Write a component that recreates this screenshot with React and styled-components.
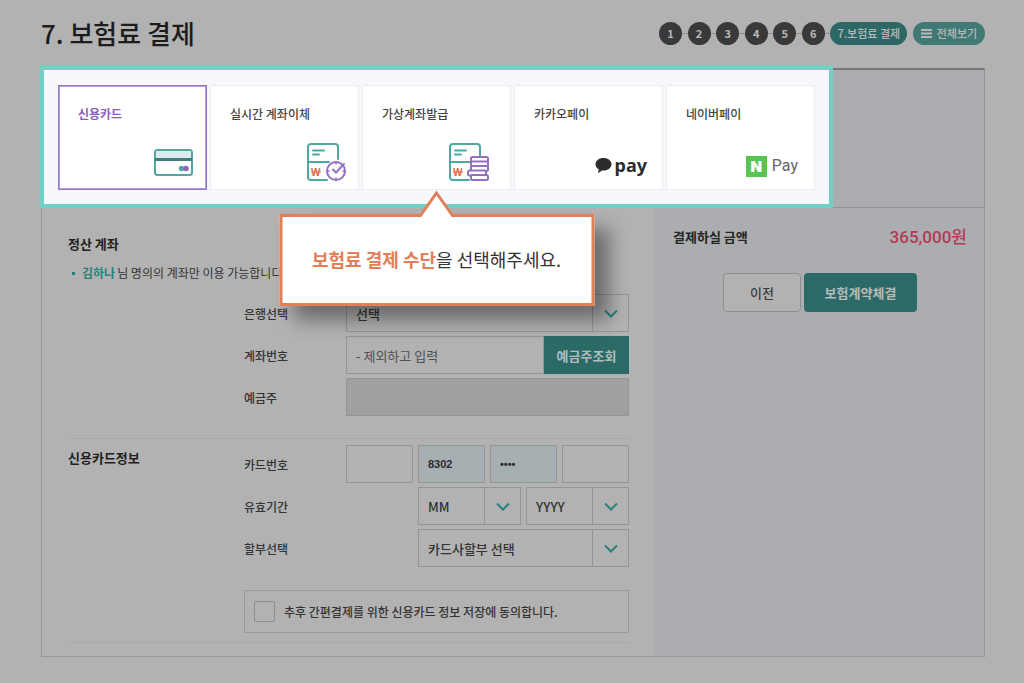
import { useState } from "react";
import styled, { createGlobalStyle } from "styled-components";

const GlobalStyle = createGlobalStyle`
  * {
    box-sizing: border-box;
  }

  body {
    margin: 0;
    background-color: #b2b2b2;
    color: #333;
    font-family: "Noto Sans CJK KR", "Noto Sans", sans-serif;
    font-size: 12px;
    line-height: 20px;
  }

  button,
  input,
  select {
    font-family: inherit;
    margin: 0;
  }
`;

const Page = styled.div`
  padding: 0 39px 27px 40px;
`;

const Header = styled.header`
  display: flex;
  align-items: center;
  justify-content: space-between;
  height: 66px;
  margin-left: 1px;
`;

const Title = styled.h1`
  margin: 0;
  font-size: 26px;
  line-height: 40px;
  font-weight: 500;
  color: #1c1c1c;
`;

const Steps = styled.ol`
  display: flex;
  align-items: center;
  justify-content: space-between;
  width: 326px;
  margin: 0;
  padding: 0;
  list-style: none;
  background: linear-gradient(#8d8d8d, #8d8d8d) 0 50% / 240px 1px no-repeat;
`;

const Step = styled.li`
  display: flex;
  align-items: center;
  justify-content: center;
  width: ${({ $current }) => ($current ? "77px" : "23px")};
  height: 23px;
  border-radius: 12px;
  background-color: ${({ $current }) => ($current ? "#2c6866" : "#393939")};
  color: #b8b8b8;
  font-size: 11px;
  font-weight: ${({ $current }) => ($current ? 500 : 700)};
  white-space: nowrap;
`;

const ViewAllButton = styled.button`
  display: flex;
  align-items: center;
  justify-content: center;
  gap: 5px;
  width: 72px;
  height: 23px;
  padding: 0;
  border: none;
  border-radius: 12px;
  background-color: #417a75;
  color: #b8b8b8;
  font-size: 11px;
  font-weight: 500;
  white-space: nowrap;
  cursor: pointer;
`;

const MethodRow = styled.div`
  display: flex;
  align-items: flex-end;
`;

const MethodList = styled.ul`
  flex: 1;
  display: flex;
  gap: 3px;
  margin: 0;
  padding: 15px 14px 14px;
  border: 4px solid #71d1c7;
  background-color: #f7f8fd;
  list-style: none;
`;

const MethodItem = styled.li`
  position: relative;
  flex: 1;
`;

const MethodCard = styled.button`
  display: flex;
  flex-direction: column;
  justify-content: space-between;
  width: 100%;
  height: 105px;
  padding: 18px 12px 7px 19px;
  border: 1px solid ${({ $active }) => ($active ? "#9a74c4" : "#ececf0")};
  box-shadow: ${({ $active }) => ($active ? "inset 0 0 0 1px #b79dd6" : "none")};
  background-color: #fff;
  color: ${({ $active }) => ($active ? "#8c5fbd" : "#444")};
  font-size: 12px;
  font-weight: ${({ $active }) => ($active ? 700 : 500)};
  line-height: 20px;
  text-align: left;
  cursor: pointer;
`;

const MethodIcon = styled.span`
  display: flex;
  align-items: center;
  justify-content: flex-end;
  align-self: flex-end;
  height: 40px;
`;

const KakaoPay = styled.span`
  display: flex;
  align-items: center;
  gap: 3px;
  padding: 6px 3px 0 0;
  color: #2c2c2c;
  font-family: "Noto Sans", sans-serif;
  font-size: 18px;
  font-weight: 700;
`;

const NaverPay = styled.span`
  display: flex;
  align-items: center;
  gap: 5px;
  padding: 8px 4px 0 0;
  color: #666;
  font-family: Roboto, sans-serif;
  font-size: 16px;
  font-weight: 400;
`;

const NaverMark = styled.span`
  width: 21px;
  height: 21px;
  background-color: #5ac452;
  color: #fff;
  font-family: Inter, sans-serif;
  font-size: 15px;
  font-weight: 900;
  line-height: 21px;
  text-align: center;
`;

const MethodBlank = styled.div`
  width: 152px;
  height: 140px;
  border: solid #929292;
  border-width: 2px 1px 1px 0;
  border-top-color: #777;
  background-color: #abacb0;
`;

const Tooltip = styled.div`
  position: absolute;
  z-index: 2;
  top: calc(100% + 24px);
  left: 50%;
  width: 315px;
  padding: 29px 0 30px;
  transform: translateX(-50%);
  border: 3px solid #e27e58;
  background-color: #fff;
  box-shadow: 14px 14px 18px rgba(0, 0, 0, 0.4);
  color: #333;
  font-size: 18px;
  line-height: 27px;
  text-align: center;
  white-space: nowrap;

  strong {
    color: #e27e58;
    font-weight: 700;
  }
`;

const TooltipArrow = styled.svg`
  position: absolute;
  bottom: 100%;
  left: 50%;
  transform: translateX(-50%);
`;

const Body = styled.div`
  display: flex;
  margin-left: 1px;
  border: solid #979797;
  border-width: 0 1px 1px;
`;

const Form = styled.form`
  flex: 1;
  padding: 23px 25px 13px 26px;
`;

const Section = styled.section`
  display: grid;
  grid-template-columns: 176px 1fr;
  padding-bottom: ${({ $last }) => ($last ? "9px" : "22px")};
  border-bottom: 1px solid #a9a9a9;

  & + & {
    padding-top: 6px;
  }
`;

const SectionTitle = styled.h2`
  margin: 0;
  font-size: 13px;
  line-height: 26px;
  font-weight: 700;
  color: #1f1f1f;
`;

const Notice = styled.p`
  grid-column: 1 / -1;
  display: flex;
  align-items: center;
  margin: 6px 0 11px;
  padding-left: 4px;

  &::before {
    content: "";
    width: 3px;
    height: 3px;
    margin-right: 7px;
    background-color: #25827b;
  }

  strong {
    margin-right: 2px;
    color: #25827b;
    font-weight: 700;
  }
`;

const Fields = styled.div`
  grid-column: 2;
  display: flex;
  flex-direction: column;
  gap: 4px;
`;

const FieldRow = styled.div`
  display: grid;
  grid-template-columns: 102px 1fr;
  align-items: center;
`;

const Label = styled.label`
  padding-top: 2px;
  font-weight: 500;
  color: #333;
`;

const CardGrid = styled.div`
  display: grid;
  grid-template-columns: repeat(4, 1fr);
  gap: 5px;
`;

const WideCell = styled.div`
  grid-column: 2 / -1;
  display: flex;
  gap: 5px;
`;

const Input = styled.input`
  width: 100%;
  min-width: 0;
  height: 38px;
  padding: 0 9px;
  border: 1px solid #959595;
  border-radius: 0;
  background-color: ${({ $filled }) => ($filled ? "#a6afb2" : "transparent")};
  color: #2c2c2c;
  font-family: ${({ $filled }) => ($filled ? '"Liberation Sans", sans-serif' : "inherit")};
  font-size: ${({ $filled }) => ($filled ? "11px" : "13px")};
  font-weight: ${({ $filled }) => ($filled ? 700 : 400)};
  outline: none;

  &::placeholder {
    color: #505050;
    opacity: 1;
  }

  &:disabled {
    background-color: #a0a0a0;
  }
`;

const InputGroup = styled.div`
  display: flex;
`;

const LookupButton = styled.button`
  flex: 0 0 85px;
  height: 38px;
  padding: 0;
  border: none;
  background-color: #2c6a67;
  color: #b4bcbc;
  font-size: 13px;
  font-weight: 700;
  cursor: pointer;
`;

const SelectBox = styled.div`
  flex: 1;
  display: grid;
  grid-template-columns: 1fr 36px;
  height: 38px;
  border: 1px solid #959595;

  & > select {
    grid-area: 1 / 1 / 2 / 3;
    width: 100%;
    min-width: 0;
    padding: 0 45px 0 9px;
    appearance: none;
    border: none;
    border-radius: 0;
    background: transparent;
    color: #333;
    font-size: 13px;
    font-weight: 500;
    outline: none;
  }
`;

const SelectArrow = styled.span`
  grid-area: 1 / 2 / 2 / 3;
  display: flex;
  align-items: center;
  justify-content: center;
  border-left: 1px solid #959595;
  pointer-events: none;
`;

const Agreement = styled.label`
  grid-column: 2;
  display: flex;
  align-items: center;
  gap: 9px;
  height: 43px;
  margin-top: 23px;
  padding: 0 9px;
  border: 1px solid #999;
  font-weight: 500;
  white-space: nowrap;
`;

const Checkbox = styled.input`
  appearance: none;
  width: 21px;
  height: 21px;
  border: 1px solid #8d8d8d;
  border-radius: 2px;

  &:checked {
    background-color: #2c6a67;
  }
`;

const Summary = styled.aside`
  width: 330px;
  padding: 15px 17px 0 19px;
  background-color: #abadb1;
`;

const AmountRow = styled.div`
  display: flex;
  align-items: center;
  justify-content: space-between;
  height: 27px;
  font-size: 13px;
  font-weight: 700;
  color: #242424;
`;

const Amount = styled.strong`
  color: #b13c54;
  font-family: Roboto, "Noto Sans CJK KR", sans-serif;
  font-size: 17px;
  font-weight: 500;
`;

const Actions = styled.div`
  display: flex;
  justify-content: center;
  gap: 3px;
  margin-top: 23px;
`;

const ActionButton = styled.button`
  width: ${({ $primary }) => ($primary ? "113px" : "78px")};
  height: 39px;
  padding: 0;
  border: ${({ $primary }) => ($primary ? "none" : "1px solid #8f8f8f")};
  border-radius: 4px;
  background-color: ${({ $primary }) => ($primary ? "#2c6a67" : "#b2b2b2")};
  color: ${({ $primary }) => ($primary ? "#b4bcbc" : "#3c3c3c")};
  font-size: 13px;
  font-weight: ${({ $primary }) => ($primary ? 700 : 500)};
  cursor: pointer;
`;

const CardIcon = () => (
  <svg width="40" height="27" viewBox="0 0 40 27" fill="none">
    <rect x="1" y="1" width="37" height="25" rx="2.5" fill="#fff" stroke="#4fa8a1" strokeWidth="2" />
    <path d="M2 2h35v7H2z" fill="#dcecec" />
    <path d="M1 10.5h37" stroke="#3d7f7b" strokeWidth="3" />
    <circle cx="27.500" cy="19.5" r="2.7" fill="#4fa8a1" />
    <circle cx="32" cy="19.5" r="2.7" fill="#8c64b8" />
  </svg>
);

const BillShape = () => (
  <>
    <path
      d="M31 16V4a3 3 0 0 0-3-3H4a3 3 0 0 0-3 3v30a3 3 0 0 0 3 3h16M1 19h21M6 7.500h11M6 11.500h6"
      stroke="#4fa8a1"
      strokeWidth="2"
      strokeLinecap="round"
    />
    <text x="4" y="33" fill="#dd6b45" fontFamily="Liberation Sans" fontSize="10" fontWeight="700">
      W
    </text>
    <path d="M4 29h10" stroke="#dd6b45" />
  </>
);

const TransferIcon = () => (
  <svg width="39" height="38" viewBox="0 0 39 38" fill="none">
    <BillShape />
    <circle cx="29" cy="28" r="9" fill="#fff" stroke="#956fc1" strokeWidth="2" />
    <path d="M29 20v1.500M29 34.500V36M21 28h1.500M35.500 28H37" stroke="#956fc1" strokeWidth="1.5" />
    <path d="M26 26.500l3 3 8-8.500" stroke="#956fc1" strokeWidth="2" strokeLinecap="round" />
  </svg>
);

const VirtualAccountIcon = () => (
  <svg width="49" height="38" viewBox="0 0 49 38" fill="none">
    <BillShape />
    <g fill="#fff" stroke="#956fc1" strokeWidth="2">
      <rect x="22" y="14" width="17" height="5" rx="1.5" />
      <rect x="22" y="18.500" width="17" height="5" rx="1.5" />
      <rect x="22" y="23" width="17" height="5" rx="1.5" />
      <rect x="19" y="27.500" width="18" height="5" rx="1.5" />
      <rect x="22" y="32" width="17" height="5" rx="1.5" />
    </g>
  </svg>
);

const BubbleIcon = () => (
  <svg width="17" height="17" viewBox="0 0 17 17" fill="#2c2c2c">
    <path d="M8.500 1C4 1 .5 3.700 .5 7.200c0 2.200 1.300 4 3.300 5.100L3 16.200l4-2.800c.5.1 1 .1 1.500.1 4.500 0 8-2.800 8-6.300S13 1 8.500 1z" />
  </svg>
);

const MenuIcon = () => (
  <svg width="11" height="9" viewBox="0 0 11 9" stroke="#b8b8b8" strokeWidth="2">
    <path d="M0 1h11M0 4.500h11M0 8h11" />
  </svg>
);

const ChevronIcon = () => (
  <svg width="14" height="9" viewBox="0 0 14 9" fill="none" stroke="#25827b" strokeWidth="2">
    <path d="M1 1.500l6 6 6-6" />
  </svg>
);

const methods = [
  { id: "card", name: "신용카드", icon: <CardIcon /> },
  { id: "transfer", name: "실시간 계좌이체", icon: <TransferIcon /> },
  { id: "virtual", name: "가상계좌발급", icon: <VirtualAccountIcon />, hint: true },
  {
    id: "kakao",
    name: "카카오페이",
    icon: (
      <KakaoPay>
        <BubbleIcon />
        pay
      </KakaoPay>
    ),
  },
  {
    id: "naver",
    name: "네이버페이",
    icon: (
      <NaverPay>
        <NaverMark>N</NaverMark>
        Pay
      </NaverPay>
    ),
  },
];

function Select({ id, label, children }) {
  return (
    <SelectBox>
      <select id={id} aria-label={label}>
        <option>{children}</option>
      </select>
      <SelectArrow>
        <ChevronIcon />
      </SelectArrow>
    </SelectBox>
  );
}

export default function App() {
  const [method, setMethod] = useState("card");
  const [agreed, setAgreed] = useState(false);

  return (
    <Page>
      <GlobalStyle />
      <Header>
        <Title>7. 보험료 결제</Title>
        <Steps>
          {[1, 2, 3, 4, 5, 6].map((n) => (
            <Step key={n}>{n}</Step>
          ))}
          <Step $current>7.보험료 결제</Step>
          <li>
            <ViewAllButton type="button">
              <MenuIcon />
              전체보기
            </ViewAllButton>
          </li>
        </Steps>
      </Header>

      <MethodRow>
        <MethodList>
          {methods.map((m) => (
            <MethodItem key={m.id}>
              <MethodCard
                type="button"
                $active={method === m.id}
                aria-pressed={method === m.id}
                onClick={() => setMethod(m.id)}
              >
                {m.name}
                <MethodIcon>{m.icon}</MethodIcon>
              </MethodCard>
              {m.hint && (
                <Tooltip role="tooltip">
                  <TooltipArrow width="36" height="27" viewBox="0 0 36 27">
                    <path d="M1 27L18 3l17 24z" fill="#fff" />
                    <path d="M0 25.500h2L18 3l16 22.500h2" fill="none" stroke="#e27e58" strokeWidth="3" />
                  </TooltipArrow>
                  <strong>보험료 결제 수단</strong>을 선택해주세요.
                </Tooltip>
              )}
            </MethodItem>
          ))}
        </MethodList>
        <MethodBlank />
      </MethodRow>

      <Body>
        <Form onSubmit={(e) => e.preventDefault()}>
          <Section>
            <SectionTitle>정산 계좌</SectionTitle>
            <Notice>
              <strong>김하나</strong>님 명의의 계좌만 이용 가능합니다
            </Notice>
            <Fields>
              <FieldRow>
                <Label htmlFor="bank">은행선택</Label>
                <Select id="bank">선택</Select>
              </FieldRow>
              <FieldRow>
                <Label htmlFor="account">계좌번호</Label>
                <InputGroup>
                  <Input id="account" type="text" placeholder="- 제외하고 입력" />
                  <LookupButton type="button">예금주조회</LookupButton>
                </InputGroup>
              </FieldRow>
              <FieldRow>
                <Label htmlFor="holder">예금주</Label>
                <Input id="holder" type="text" disabled />
              </FieldRow>
            </Fields>
          </Section>

          <Section $last>
            <SectionTitle>신용카드정보</SectionTitle>
            <Fields>
              <FieldRow>
                <Label htmlFor="card1">카드번호</Label>
                <CardGrid>
                  <Input id="card1" type="text" maxLength={4} />
                  <Input type="text" maxLength={4} defaultValue="8302" aria-label="카드번호 2" $filled />
                  <Input type="password" maxLength={4} defaultValue="0000" aria-label="카드번호 3" $filled />
                  <Input type="text" maxLength={4} aria-label="카드번호 4" />
                </CardGrid>
              </FieldRow>
              <FieldRow>
                <Label htmlFor="month">유효기간</Label>
                <CardGrid>
                  <WideCell>
                    <Select id="month">MM</Select>
                    <Select id="year" label="유효기간 연도">
                      YYYY
                    </Select>
                  </WideCell>
                </CardGrid>
              </FieldRow>
              <FieldRow>
                <Label htmlFor="installment">할부선택</Label>
                <CardGrid>
                  <WideCell>
                    <Select id="installment">카드사할부 선택</Select>
                  </WideCell>
                </CardGrid>
              </FieldRow>
            </Fields>
            <Agreement>
              <Checkbox type="checkbox" checked={agreed} onChange={(e) => setAgreed(e.target.checked)} />
              추후 간편결제를 위한 신용카드 정보 저장에 동의합니다.
            </Agreement>
          </Section>
        </Form>

        <Summary>
          <AmountRow>
            결제하실 금액
            <Amount>365,000원</Amount>
          </AmountRow>
          <Actions>
            <ActionButton type="button">이전</ActionButton>
            <ActionButton type="button" $primary>
              보험계약체결
            </ActionButton>
          </Actions>
        </Summary>
      </Body>
    </Page>
  );
}
